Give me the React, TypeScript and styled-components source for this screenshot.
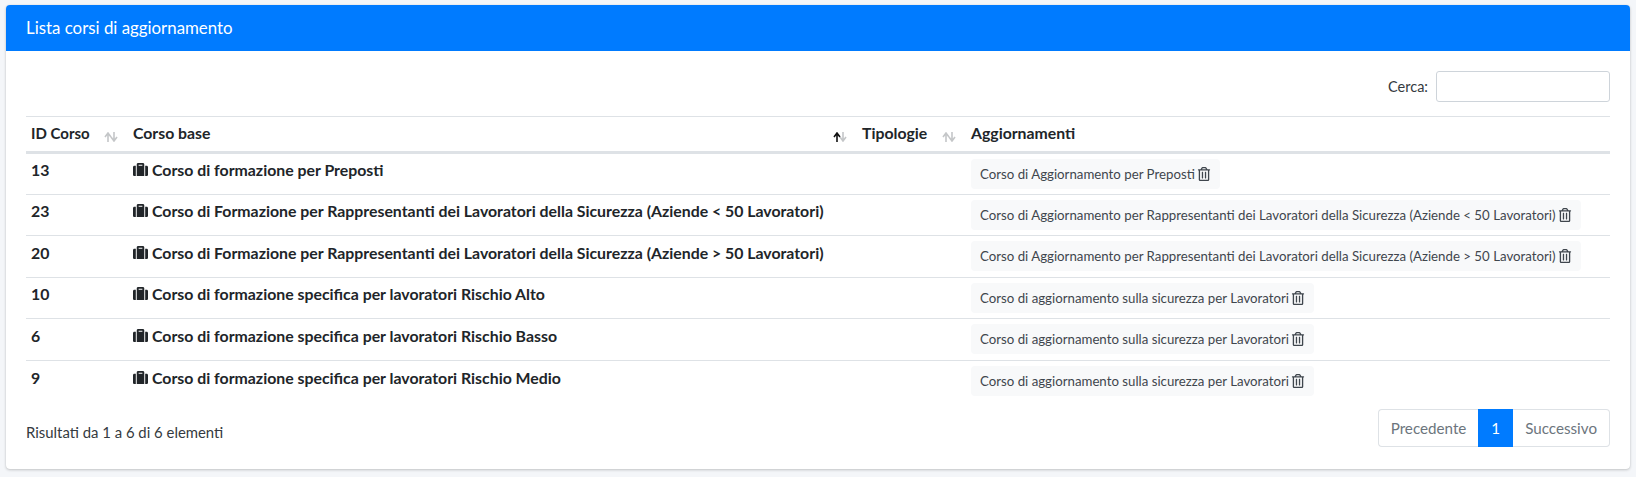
import React from "react";
import styled, { createGlobalStyle } from "styled-components";
import { FaSuitcase, FaRegTrashAlt } from "react-icons/fa";

const GlobalStyle = createGlobalStyle`
    html, body {
        margin: 0;
        padding: 0;
        background: #f4f6f9;
    }
    body {
        font-family: "Lato", "Liberation Sans", sans-serif;
        font-size: 14px;
        color: #212529;
    }
`;

const rows = [
    { id: "13", base: "Corso di formazione per Preposti", update: "Corso di Aggiornamento per Preposti" },
    { id: "23", base: "Corso di Formazione per Rappresentanti dei Lavoratori della Sicurezza (Aziende < 50 Lavoratori)", update: "Corso di Aggiornamento per Rappresentanti dei Lavoratori della Sicurezza (Aziende < 50 Lavoratori)" },
    { id: "20", base: "Corso di Formazione per Rappresentanti dei Lavoratori della Sicurezza (Aziende > 50 Lavoratori)", update: "Corso di Aggiornamento per Rappresentanti dei Lavoratori della Sicurezza (Aziende > 50 Lavoratori)" },
    { id: "10", base: "Corso di formazione specifica per lavoratori Rischio Alto", update: "Corso di aggiornamento sulla sicurezza per Lavoratori" },
    { id: "6", base: "Corso di formazione specifica per lavoratori Rischio Basso", update: "Corso di aggiornamento sulla sicurezza per Lavoratori" },
    { id: "9", base: "Corso di formazione specifica per lavoratori Rischio Medio", update: "Corso di aggiornamento sulla sicurezza per Lavoratori" },
];

const App = () => {
    return (
        <Page>
            <GlobalStyle />
            <Card>
                <CardHeader>Lista corsi di aggiornamento</CardHeader>
                <CardBody>
                    <SearchRow>
                        <SearchLabel>Cerca:</SearchLabel>
                        <SearchInput type="search" />
                    </SearchRow>
                    <Table>
                        <colgroup>
                            <ColId />
                            <ColBase />
                            <ColType />
                            <col />
                        </colgroup>
                        <thead>
                            <tr>
                                <HeadCell $small>ID Corso<Sort /></HeadCell>
                                <HeadCell>Corso base<Sort active /></HeadCell>
                                <HeadCell>Tipologie<Sort /></HeadCell>
                                <HeadCell>Aggiornamenti</HeadCell>
                            </tr>
                        </thead>
                        <tbody>
                            {rows.map((row, i) => (
                                <tr key={row.id}>
                                    <TextCell $first={i === 0}>{row.id}</TextCell>
                                    <TextCell $first={i === 0}>
                                        <BaseName><FaSuitcase size={15} />{row.base}</BaseName>
                                    </TextCell>
                                    <Cell $first={i === 0} />
                                    <Cell $first={i === 0}>
                                        <Pill>{row.update}<FaRegTrashAlt size={14} /></Pill>
                                    </Cell>
                                </tr>
                            ))}
                        </tbody>
                    </Table>
                    <Footer>
                        <Info>Risultati da 1 a 6 di 6 elementi</Info>
                        <Pagination>
                            <PageLink $side="left">Precedente</PageLink>
                            <PageLink $active>1</PageLink>
                            <PageLink $side="right">Successivo</PageLink>
                        </Pagination>
                    </Footer>
                </CardBody>
            </Card>
        </Page>
    );
};

const Sort = ({ active }: { active?: boolean }) => (
    <SortIcon width="14" height="10" viewBox="0 0 14 10">
        <path d="M4 10V2M1 5l3-4 3 4" fill="none" strokeWidth="1.6" stroke={active ? "#111" : "#c4c6c8"} />
        <path d="M10 0v8M7 5l3 4 3-4" fill="none" strokeWidth="1.6" stroke="#c4c6c8" />
    </SortIcon>
);

const Page = styled.div`
    padding: 5px 6px 7px;
`;
const Card = styled.div`
    background: #fff;
    border-radius: 4px;
    box-shadow: 0 0 1px rgba(0,0,0,.125), 0 1px 3px rgba(0,0,0,.2);
    overflow: hidden;
`;
const CardHeader = styled.div`
    height: 46px;
    line-height: 45px;
    padding-left: 20px;
    background: #007bff;
    color: #fff;
    font-size: 16.85px;
`;
const CardBody = styled.div`
    padding: 20px 20px 22px;
`;
const SearchRow = styled.div`
    display: flex;
    justify-content: flex-end;
    align-items: center;
    gap: 8px;
    height: 31px;
    margin-bottom: 14px;
`;
const SearchLabel = styled.label`
    font-size: 14.5px;
    color: #343a40;
`;
const SearchInput = styled.input`
    box-sizing: border-box;
    width: 174px;
    height: 31px;
    border: 1px solid #ced4da;
    border-radius: 3px;
    background: #fff;
`;
const Table = styled.table`
    width: 100%;
    table-layout: fixed;
    border-collapse: collapse;
`;
const ColId = styled.col`
    width: 102px;
`;
const ColBase = styled.col`
    width: 729px;
`;
const ColType = styled.col`
    width: 109px;
`;
const HeadCell = styled.th<{ $small?: boolean }>`
    position: relative;
    box-sizing: border-box;
    height: 36px;
    padding: 0 5px 2px;
    border-top: 1px solid #dee2e6;
    border-bottom: 3px solid #dee2e6;
    text-align: left;
    font-size: ${props => props.$small ? "15px" : "15.8px"};
    line-height: 20px;
    font-weight: 700;
    color: #212529;
`;
const SortIcon = styled.svg`
    position: absolute;
    right: 10px;
    top: 15px;
`;
const Cell = styled.td<{ $first?: boolean }>`
    height: 41.5px;
    padding: 0 5px;
    border-top: ${props => props.$first ? "none" : "1px solid #dee2e6"};
    box-sizing: border-box;
`;
const TextCell = styled(Cell)`
    padding-bottom: 8px;
    font-weight: 700;
    font-size: 15.85px;
`;
const BaseName = styled.span`
    display: flex;
    align-items: center;
    gap: 4px;
    color: #212529;
    white-space: nowrap;
`;
const Pill = styled.span`
    display: inline-flex;
    align-items: center;
    gap: 2px;
    height: 30px;
    padding: 0 9px;
    background: #f8f9fa;
    border-radius: 4px;
    font-size: 13.25px;
    color: #3f464d;
    white-space: nowrap;
`;
const Footer = styled.div`
    display: flex;
    justify-content: space-between;
    align-items: center;
    margin-top: 7px;
`;
const Info = styled.div`
    padding-top: 8px;
    font-size: 14.9px;
    color: #343a40;
`;
const Pagination = styled.div`
    display: flex;
    height: 38px;
`;
const PageLink = styled.span<{ $active?: boolean; $side?: "left" | "right" }>`
    display: flex;
    align-items: center;
    padding: 0 12px;
    font-size: 15.2px;
    box-sizing: border-box;
    color: ${props => props.$active ? "#fff" : "#6c757d"};
    background: ${props => props.$active ? "#007bff" : "#fff"};
    border: 1px solid ${props => props.$active ? "#007bff" : "#dee2e6"};
    border-left-width: ${props => props.$side === "right" ? 0 : "1px"};
    border-right-width: ${props => props.$side === "left" ? 0 : "1px"};
    border-radius: ${props => props.$side === "left" ? "4px 0 0 4px" : props.$side === "right" ? "0 4px 4px 0" : "0"};
`;

export default App;
